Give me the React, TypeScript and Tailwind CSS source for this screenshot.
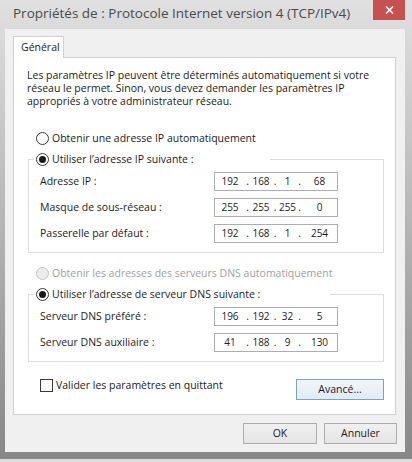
import clsx from "clsx"

const ui = "font-['Open_Sans',sans-serif]"

function Radio({ checked, disabled }: { checked?: boolean; disabled?: boolean }) {
  return (
    <span
      className={clsx(
        "flex size-[13px] shrink-0 items-center justify-center rounded-full border",
        disabled ? "border-[#c4c4c4] bg-[#ececec]" : "border-[#3a3a3a] bg-white"
      )}
    >
      {checked && <span className="size-[7px] rounded-full bg-[#1a1a1a]" />}
    </span>
  )
}

function IpField({ parts }: { parts: string[] }) {
  return (
    <div className="flex h-[19px] w-[124px] items-center border border-[#abadb3] bg-white text-[10px] text-[#1b1b1b]">
      <span className="w-[30px] text-center">{parts[0]}</span>
      <span className="w-[5px] text-center">.</span>
      <span className="w-[22px] text-center">{parts[1]}</span>
      <span className="w-[6px] text-center">.</span>
      <span className="w-[19px] text-center">{parts[2]}</span>
      <span className="w-[5px] text-center">.</span>
      <span className="flex-1 text-center">{parts[3]}</span>
    </div>
  )
}

function Row({ label, parts }: { label: string; parts: string[] }) {
  return (
    <div className="flex items-center">
      <span className="w-[174px]">{label}</span>
      <IpField parts={parts} />
    </div>
  )
}

function Group({
  legend,
  legendWidth,
  rows,
}: {
  legend: string
  legendWidth: string
  rows: { label: string; parts: string[] }[]
}) {
  return (
    <fieldset className="ml-[14px] w-[356px] border border-[#dcdcdc]">
      <legend className={clsx("ml-[5px] flex h-[13px] items-center gap-[3px] pl-[2px]", legendWidth)}>
        <Radio checked />
        <span>{legend}</span>
      </legend>
      <div className="flex flex-col gap-[7px] pt-[6px] pb-[9px] pl-[11px]">
        {rows.map((r) => (
          <Row key={r.label} label={r.label} parts={r.parts} />
        ))}
      </div>
    </fieldset>
  )
}

function Button({ children, focused, className }: { children: string; focused?: boolean; className?: string }) {
  return (
    <div
      className={clsx(
        "flex h-[21px] items-center justify-center border text-[#1b1b1b]",
        focused
          ? "border-[#7ba2c8] bg-linear-to-b from-[#f2f6fa] to-[#e2eaf3]"
          : "border-[#acacac] bg-linear-to-b from-[#f0f0f0] to-[#e5e5e5]",
        className
      )}
    >
      {children}
    </div>
  )
}

export default function App() {
  return (
    <div className={clsx("h-[462px] w-[412px] bg-[#dcdcdc] text-[10.5px] leading-[13px] text-[#1b1b1b]", ui)}>
      <div className="flex h-[459px] flex-col bg-linear-to-b from-[#e0e0e0] via-[#b4b4b4] to-[#878787] pr-[7px] pl-[5px]">
        {/* title bar */}
        <div className="-ml-[5px] flex h-[29px] items-start">
          <span className="pt-[5px] pl-[13px] text-[13.5px] leading-[17px] text-[#4a4a4a]">
            Propriétés de : Protocole Internet version 4 (TCP/IPv4)
          </span>
          <div className="ml-auto flex h-[20px] w-[32px] items-center justify-center bg-[#c75050]">
            <svg width="9" height="8" viewBox="0 0 9 8">
              <path d="M1 0.5 L8 7.5 M8 0.5 L1 7.5" stroke="white" strokeWidth="1.6" />
            </svg>
          </div>
        </div>

        {/* dialog body */}
        <div className="flex h-[423px] w-[400px] flex-col bg-[#f0f0f0] pt-[7px]">
          <div className="relative z-10 ml-[8px] -mb-px flex h-[22px] w-[51px] items-center border border-b-0 border-[#d0d0d0] bg-white pl-[7px]">
            Général
          </div>
          <div className="ml-[8px] flex h-[358px] w-[383px] flex-col border border-[#d0d0d0] bg-white">
            <p className="mt-[11px] ml-[13px]">
              Les paramètres IP peuvent être déterminés automatiquement si votre
              <br />
              réseau le permet. Sinon, vous devez demander les paramètres IP
              <br />
              appropriés à votre administrateur réseau.
            </p>

            <div className="mt-[24px] ml-[22px] flex h-[13px] items-center gap-[3px]">
              <Radio />
              <span>Obtenir une adresse IP automatiquement</span>
            </div>

            <div className="mt-[8px]">
              <Group
                legend="Utiliser l’adresse IP suivante :"
                legendWidth="w-[236px]"
                rows={[
                  { label: "Adresse IP :", parts: ["192", "168", "1", "68"] },
                  { label: "Masque de sous-réseau :", parts: ["255", "255", "255", "0"] },
                  { label: "Passerelle par défaut :", parts: ["192", "168", "1", "254"] },
                ]}
              />
            </div>

            <div className="mt-[14px] ml-[22px] flex h-[13px] items-center gap-[3px] text-[#a0a0a0]">
              <Radio disabled />
              <span>Obtenir les adresses des serveurs DNS automatiquement</span>
            </div>

            <div className="mt-[8px]">
              <Group
                legend="Utiliser l’adresse de serveur DNS suivante :"
                legendWidth="w-[296px]"
                rows={[
                  { label: "Serveur DNS préféré :", parts: ["196", "192", "32", "5"] },
                  { label: "Serveur DNS auxiliaire :", parts: ["41", "188", "9", "130"] },
                ]}
              />
            </div>

            <div className="mt-[17px] flex items-start">
              <div className="ml-[26px] flex h-[13px] items-center gap-[3px]">
                <span className="size-[13px] border border-[#3a3a3a] bg-white" />
                <span>Valider les paramètres en quittant</span>
              </div>
              <Button focused className="mr-[11px] ml-auto w-[88px]">
                Avancé...
              </Button>
            </div>
          </div>

          <div className="mt-[8px] flex justify-end gap-[7px] pr-[8px]">
            <Button className="w-[74px]">OK</Button>
            <Button className="w-[73px]">Annuler</Button>
          </div>
        </div>
      </div>
    </div>
  )
}
